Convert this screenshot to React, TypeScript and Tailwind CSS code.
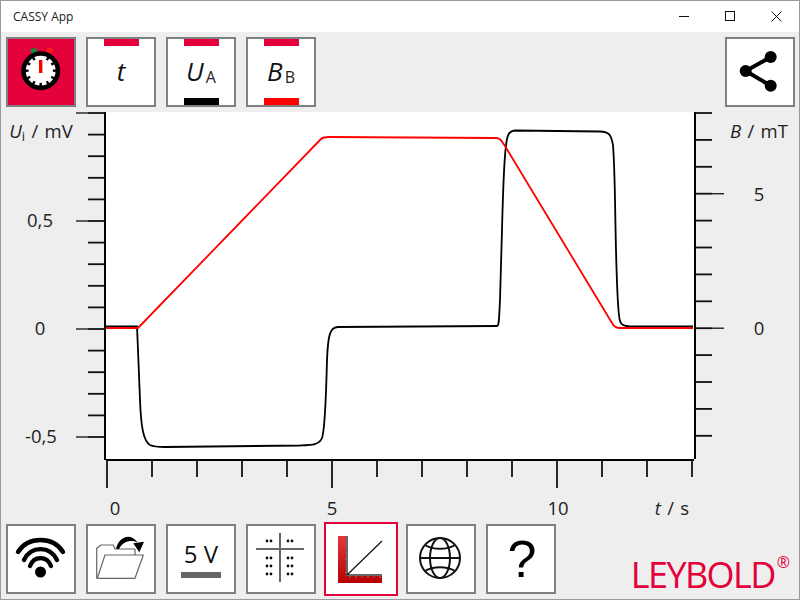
import React from 'react';

const blackCurve =
  'M106 326.5 L137 326.5 L138 350 L140 400 C141 425 143 441 150 445 C154 447 158 447 165 447 L300 445.5 C312 445 319 445 322 438 C325 430 326 400 327 360 C328 335 330 327 338 327 L497 326 C499 326 499 320 500 300 L502 230 C503 190 504 160 506 146 C507 135 509 131 515 130.5 L600 131.5 C609 132 611 134 613 145 C615 170 615 210 616 250 C617 290 618 315 620 321 C621 325 624 326 632 326.5 L693 326.5';
const redCurve =
  'M106 328 L138 328 L321 139 C323 137 325 137 329 137 L496 138 C500 138 501 140 505 146 L612 323 C614 327 616 328 620 328 L693 328';

function ToolButton({ children, selected, className = '' }: { children?: React.ReactNode; selected?: boolean; className?: string }) {
  return (
    <div
      className={`relative shrink-0 flex items-center justify-center border-2 ${
        selected ? 'w-[74px] h-[74px] -mx-[2px] border-[#e4003a] bg-white' : 'w-[70px] h-[70px] border-[#808080] bg-white'
      } ${className}`}
    >
      {children}
    </div>
  );
}

function ChannelButton({ main, sub, bottom }: { main: string; sub?: string; bottom?: string }) {
  return (
    <ToolButton>
      <div className="absolute top-0 left-[16px] w-[35px] h-[7px] bg-[#e4003a]" />
      <span className="text-[26px] leading-none italic text-[#111] -mt-[3px]">{main}</span>
      {sub && <span className="text-[16px] leading-none text-[#222] mt-[9px] ml-[2px]">{sub}</span>}
      {bottom === 'black' && <div className="absolute bottom-0 left-[16px] w-[35px] h-[7px] bg-black" />}
      {bottom === 'red' && <div className="absolute bottom-0 left-[16px] w-[35px] h-[7px] bg-[#ff0000]" />}
    </ToolButton>
  );
}

function TimerIcon() {
  const ticks = [30, 60, 90, 120, 150, 180, 210, 240, 270, 300, 330];
  return (
    <svg width="66" height="66" viewBox="0 0 66 66">
      <rect x="23" y="9.5" width="6" height="5" fill="#0a8f3c" transform="rotate(-15 26 12)" />
      <rect x="39" y="9" width="6" height="5" fill="#ff1a1a" transform="rotate(20 42 11)" />
      <circle cx="32.7" cy="31.7" r="17.2" fill="#fff" stroke="#000" strokeWidth="4.6" />
      {ticks.map((a) => (
        <line key={a} x1="32.7" y1="16" x2="32.7" y2="19.5" stroke="#000" strokeWidth="2.4" transform={`rotate(${a} 32.7 31.7)`} />
      ))}
      <rect x="31" y="21" width="3.4" height="13" fill="#ff0000" />
    </svg>
  );
}

function ShareIcon() {
  return (
    <svg width="66" height="66" viewBox="0 0 66 66">
      <path d="M43.7 18 L18.7 32 L43.7 46.7" fill="none" stroke="#000" strokeWidth="4" />
      <circle cx="43.7" cy="18" r="6" fill="#000" />
      <circle cx="18.7" cy="32" r="6" fill="#000" />
      <circle cx="43.7" cy="46.7" r="6" fill="#000" />
    </svg>
  );
}

function WifiIcon() {
  return (
    <svg width="66" height="66" viewBox="0 0 66 66">
      <g fill="none" stroke="#000" strokeWidth="4.4" strokeLinecap="round">
        <path d="M10 26 C20 10 45 10 55 26" />
        <path d="M16 34 C23 19.5 42 19.5 49 34" />
        <path d="M22 40 C26 29.5 39 29.5 43 40" />
      </g>
      <circle cx="32.5" cy="46" r="5.5" fill="#000" />
    </svg>
  );
}

function FolderIcon() {
  return (
    <svg width="66" height="66" viewBox="0 0 66 66">
      <g fill="#fff" stroke="#666" strokeWidth="1.2" strokeLinejoin="round">
        <path d="M8.7 52 L8.7 22.3 L13 19 L25.3 19 L27 23 L47 23 L47 30 L8.7 52 Z" />
        <path d="M17 29 L55.3 29 L47 52.3 L9.3 52.3 Z" />
      </g>
      <path d="M28 23 C30 12 42 5 50 17 C44 13 35 15 31 23 Z" fill="#000" />
      <path d="M45.3 17.3 L56 15.7 L51.3 26.3 Z" fill="#000" />
    </svg>
  );
}

function GridIcon() {
  const pairs = [
    [13, 15],
    [34, 15],
    [13, 32],
    [34, 32],
    [13, 40],
    [34, 40],
    [13, 48],
    [34, 48],
  ];
  return (
    <svg width="66" height="66" viewBox="0 0 66 66">
      <line x1="32" y1="7" x2="32" y2="56" stroke="#666" strokeWidth="2" />
      <line x1="8" y1="23" x2="56" y2="23" stroke="#666" strokeWidth="2" />
      {pairs.map(([x, y]) => (
        <g key={`${x}-${y}`} fill="#111">
          <circle cx={x + 6} cy={y} r="1.4" />
          <circle cx={x + 10} cy={y} r="1.4" />
        </g>
      ))}
    </svg>
  );
}

function RulerIcon() {
  const marks = [0, 1, 2, 3, 4, 5];
  return (
    <svg width="70" height="70" viewBox="0 0 70 70">
      <defs>
        <linearGradient id="ruler" x1="0" y1="0" x2="0" y2="1">
          <stop offset="0" stopColor="#e2383c" />
          <stop offset="1" stopColor="#b80000" />
        </linearGradient>
      </defs>
      <path d="M12 12 L21 12 L21 51 L56 51 L56 59 L12 59 Z" fill="url(#ruler)" />
      <path d="M21 12 L21 51 L56 51" fill="none" stroke="#666" strokeWidth="2" />
      {marks.map((i) => (
        <g key={i} stroke="#777" strokeWidth="1">
          <line x1="19" x2="21" y1={16 + i * 6.5} y2={16 + i * 6.5} />
          <line y1="51" y2="54" x1={24 + i * 6} x2={24 + i * 6} />
        </g>
      ))}
      <line x1="21" y1="51" x2="56" y2="17" stroke="#111" strokeWidth="1.2" />
    </svg>
  );
}

function GlobeIcon() {
  return (
    <svg width="66" height="66" viewBox="0 0 66 66">
      <g fill="none" stroke="#111" strokeWidth="2">
        <circle cx="32" cy="32" r="20" />
        <ellipse cx="32" cy="32" rx="10" ry="20" />
        <line x1="12" y1="32" x2="52" y2="32" />
        <path d="M17 19 C25 24 39 24 47 19" />
        <path d="M17 45 C25 40 39 40 47 45" />
      </g>
    </svg>
  );
}

function Chart() {
  const leftTicks = Array.from({ length: 16 }, (_, i) => i);
  const rightTicks = Array.from({ length: 13 }, (_, i) => i);
  const bottomTicks = Array.from({ length: 14 }, (_, i) => i);
  return (
    <svg width="798" height="410" viewBox="1 112 798 410" className="block shrink-0">
      <rect x="106" y="112" width="588" height="347" fill="#fff" />
      {/* y axis left */}
      <line x1="105" y1="112" x2="105" y2="460" stroke="#000" strokeWidth="2" />
      {leftTicks.map((i) => {
        const y = 113 + i * 21.6;
        return (
          <g key={i}>
            <line x1="88" x2="105" y1={y} y2={y} stroke="#111" strokeWidth="1.8" />
            {i % 5 === 0 && <line x1="76" x2="88" y1={y} y2={y} stroke="#222" strokeWidth="1.4" />}
          </g>
        );
      })}
      {/* y axis right */}
      <line x1="695" y1="112" x2="695" y2="459" stroke="#000" strokeWidth="2" />
      {rightTicks.map((i) => {
        const y = 113 + i * 26.9;
        return (
          <g key={i}>
            <line x1="695" x2="712" y1={y} y2={y} stroke="#111" strokeWidth="1.8" />
            {(i === 3 || i === 8) && <line x1="712" x2="724" y1={y} y2={y} stroke="#222" strokeWidth="1.4" />}
          </g>
        );
      })}
      {/* x axis */}
      <line x1="106" y1="460" x2="694" y2="460" stroke="#000" strokeWidth="2" />
      {bottomTicks.map((i) => {
        const x = 107 + i * 45;
        const major = i % 5 === 0;
        return <line key={i} x1={x} x2={x} y1="460" y2={major ? 488 : 477} stroke="#111" strokeWidth="1.8" />;
      })}
      <path d={blackCurve} fill="none" stroke="#000" strokeWidth="1.8" />
      <path d={redCurve} fill="none" stroke="#ff0000" strokeWidth="1.8" />
      <g fontSize="18.5" fill="#222" textAnchor="middle" wordSpacing="1.5">
        <text x="40" y="227">0,5</text>
        <text x="40" y="335">0</text>
        <text x="41" y="443">-0,5</text>
        <text x="759" y="201">5</text>
        <text x="759" y="335">0</text>
        <text x="115" y="515">0</text>
        <text x="332" y="515">5</text>
        <text x="558" y="515">10</text>
        <text x="672" y="515">
          <tspan fontStyle="italic">t</tspan> / s
        </text>
        <text x="41" y="138">
          <tspan fontStyle="italic">U</tspan>
          <tspan fontSize="13" dy="3">i</tspan>
          <tspan dy="-3"> / mV</tspan>
        </text>
        <text x="759" y="138">
          <tspan fontStyle="italic">B</tspan> / mT
        </text>
      </g>
    </svg>
  );
}

export default function App() {
  return (
    <div className="w-[800px] h-[600px] flex flex-col overflow-hidden border border-[#9a9a9a] bg-[#eeeeee] font-['Open_Sans',sans-serif]">
      <div className="h-[31px] shrink-0 flex items-center bg-white pl-[12px]">
        <span className="text-[12px] text-[#222]">CASSY App</span>
        <div className="ml-auto flex items-center">
          <div className="w-[46px] flex justify-center">
            <svg width="11" height="11" viewBox="0 0 11 11"><line x1="0" y1="5.5" x2="10" y2="5.5" stroke="#111" /></svg>
          </div>
          <div className="w-[46px] flex justify-center">
            <svg width="11" height="11" viewBox="0 0 11 11"><rect x="0.5" y="0.5" width="9" height="9" fill="none" stroke="#111" /></svg>
          </div>
          <div className="w-[46px] flex justify-center">
            <svg width="11" height="11" viewBox="0 0 11 11"><path d="M0.5 0.5 L10.5 10.5 M10.5 0.5 L0.5 10.5" fill="none" stroke="#111" /></svg>
          </div>
        </div>
      </div>

      <div className="h-[80px] shrink-0 flex items-start gap-[10px] pl-[5px] pr-[4px] pt-[5px]">
        <ToolButton className="!bg-[#e4003a]">
          <TimerIcon />
        </ToolButton>
        <ChannelButton main="t" />
        <ChannelButton main="U" sub="A" bottom="black" />
        <ChannelButton main="B" sub="B" bottom="red" />
        <div className="ml-auto">
          <ToolButton>
            <ShareIcon />
          </ToolButton>
        </div>
      </div>

      <Chart />

      <div className="h-[74px] shrink-0 flex items-center gap-[10px] pl-[5px]">
        <ToolButton><WifiIcon /></ToolButton>
        <ToolButton><FolderIcon /></ToolButton>
        <ToolButton>
          <div className="flex flex-col items-center">
            <span className="text-[24px] leading-[26px] text-[#111]">5 V</span>
            <div className="w-[40px] h-[6px] bg-[#666] mt-[5px]" />
          </div>
        </ToolButton>
        <ToolButton><GridIcon /></ToolButton>
        <ToolButton selected><RulerIcon /></ToolButton>
        <ToolButton><GlobeIcon /></ToolButton>
        <ToolButton>
          <span className="text-[52px] leading-none text-black ml-[2px] font-['Liberation_Sans',sans-serif]">?</span>
        </ToolButton>
        <div className="ml-auto self-end -mb-[1px] mr-[9px] flex items-start text-[#e4003a]">
          <span className="text-[36px] leading-[44px] font-medium tracking-[-1.6px]">LEYBOLD</span>
          <span className="text-[16px] leading-[16px] mt-[1px] ml-[2px]">®</span>
        </div>
      </div>
    </div>
  );
}
